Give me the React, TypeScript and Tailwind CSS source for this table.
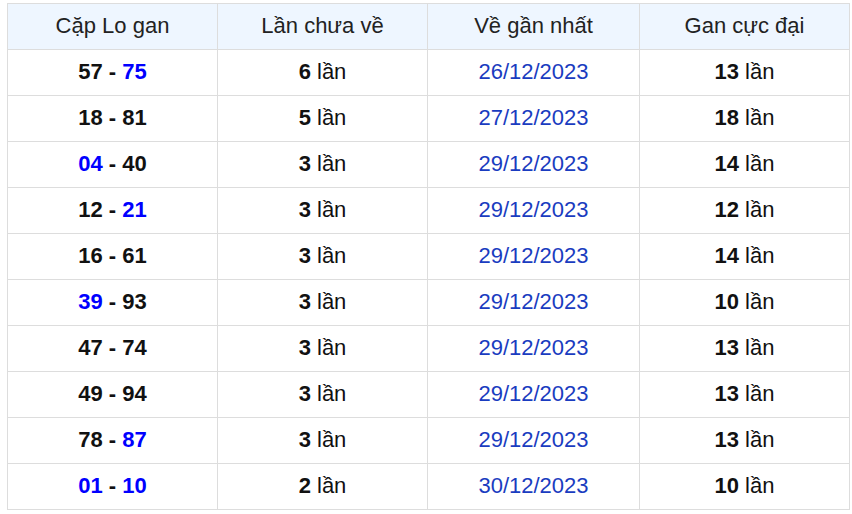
const rows: [string, boolean, string, boolean, number, string, number][] = [
  ["57", false, "75", true, 6, "26/12/2023", 13],
  ["18", false, "81", false, 5, "27/12/2023", 18],
  ["04", true, "40", false, 3, "29/12/2023", 14],
  ["12", false, "21", true, 3, "29/12/2023", 12],
  ["16", false, "61", false, 3, "29/12/2023", 14],
  ["39", true, "93", false, 3, "29/12/2023", 10],
  ["47", false, "74", false, 3, "29/12/2023", 13],
  ["49", false, "94", false, 3, "29/12/2023", 13],
  ["78", false, "87", true, 3, "29/12/2023", 13],
  ["01", true, "10", true, 2, "30/12/2023", 10],
]

const cell = "border border-[#dddddd] h-[46px] p-0 pb-[3px] text-center align-middle"

export default function App() {
  return (
    <div className="bg-white w-[852px] h-[514px] pt-[3px] pl-[7px] font-['Liberation_Sans',Arial,sans-serif] text-[22px] text-[#111]">
      <table className="w-[842px] border-collapse table-fixed">
        <colgroup>
          <col className="w-[210px]" />
          <col className="w-[210px]" />
          <col className="w-[212px]" />
          <col className="w-[210px]" />
        </colgroup>
        <thead>
          <tr className="bg-[#eef6ff]">
            <th className={`${cell} font-normal text-[#222]`}>Cặp Lo gan</th>
            <th className={`${cell} font-normal text-[#222]`}>Lần chưa về</th>
            <th className={`${cell} font-normal text-[#222]`}>Về gần nhất</th>
            <th className={`${cell} font-normal text-[#222]`}>Gan cực đại</th>
          </tr>
        </thead>
        <tbody>
          {rows.map((r, i) => (
            <tr key={i}>
              <td className={`${cell} font-bold`}>
                <span className={r[1] ? "text-[#0000ff]" : "text-[#111]"}>{r[0]}</span>
                {" - "}
                <span className={r[3] ? "text-[#0000ff]" : "text-[#111]"}>{r[2]}</span>
              </td>
              <td className={cell}>
                <b>{r[4]}</b> lần
              </td>
              <td className={`${cell} text-[#1a3cc0]`}>{r[5]}</td>
              <td className={cell}>
                <b>{r[6]}</b> lần
              </td>
            </tr>
          ))}
        </tbody>
      </table>
    </div>
  )
}
